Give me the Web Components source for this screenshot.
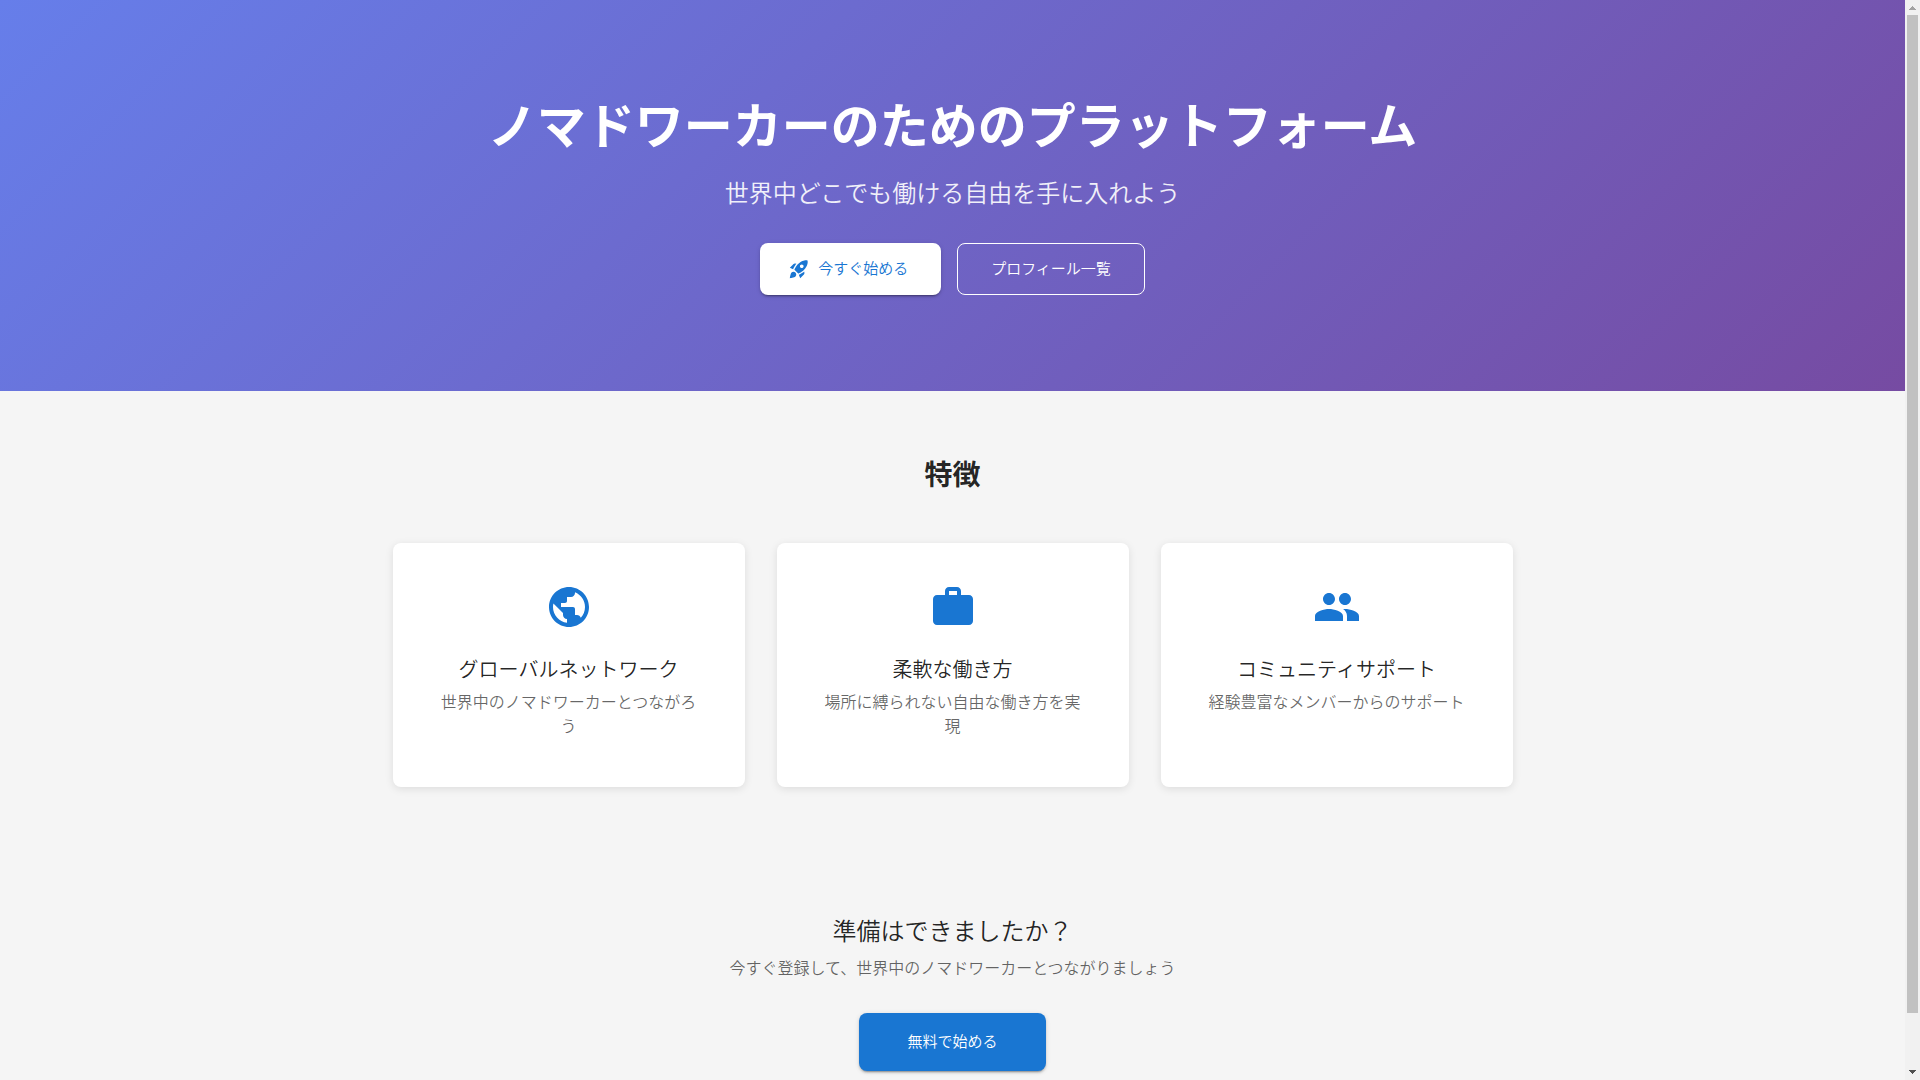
<!DOCTYPE html>
<html lang="ja">
<head>
<meta charset="utf-8">
<meta name="viewport" content="width=device-width, initial-scale=1">
<title>ノマドワーカーのためのプラットフォーム</title>
<style>
body {
  margin: 0;
  background-color: #f5f5f5;
  color: rgba(0, 0, 0, 0.87);
  font-family: Roboto, "Liberation Sans", "Noto Sans CJK JP", sans-serif;
  font-size: 16px;
  font-weight: 350;
  line-height: 24px;
}
</style>
</head>
<body>
<nomad-page></nomad-page>

<script>
const icons = {
  rocket: 'M9.19 6.35c-2.04 2.29-3.44 5.58-3.57 5.89L2 10.69l4.05-4.05c.47-.47 1.15-.68 1.81-.55zM11.17 17s3.74-1.55 5.89-3.7c5.4-5.4 4.5-9.62 4.21-10.57-.95-.3-5.17-1.19-10.57 4.21C8.55 9.09 7 12.83 7 12.83zm6.48-2.19c-2.29 2.04-5.58 3.44-5.89 3.57L13.31 22l4.05-4.05c.47-.47.68-1.15.55-1.81zM9 18c0 .83-.34 1.58-.88 2.12C6.94 21.3 2 22 2 22s.7-4.94 1.88-6.12C4.42 15.34 5.17 15 6 15c1.66 0 3 1.34 3 3m4-9c0-1.1.9-2 2-2s2 .9 2 2-.9 2-2 2-2-.9-2-2',
  public: 'M12 2C6.48 2 2 6.48 2 12s4.48 10 10 10 10-4.48 10-10S17.52 2 12 2m-1 17.93c-3.95-.49-7-3.85-7-7.93 0-.62.08-1.21.21-1.79L9 15v1c0 1.1.9 2 2 2zm6.9-2.54c-.26-.81-1-1.39-1.9-1.39h-1v-3c0-.55-.45-1-1-1H8v-2h2c.55 0 1-.45 1-1V7h2c1.1 0 2-.9 2-2v-.41c2.93 1.19 5 4.06 5 7.41 0 2.08-.8 3.97-2.1 5.39',
  work: 'M20 6h-4V4c0-1.11-.89-2-2-2h-4c-1.11 0-2 .89-2 2v2H4c-1.11 0-1.99.89-1.99 2L2 19c0 1.11.89 2 2 2h16c1.11 0 2-.89 2-2V8c0-1.11-.89-2-2-2m-6 0h-4V4h4z',
  people: 'M16 11c1.66 0 2.99-1.34 2.99-3S17.66 5 16 5s-3 1.34-3 3 1.34 3 3 3m-8 0c1.66 0 2.99-1.34 2.99-3S9.66 5 8 5 5 6.34 5 8s1.34 3 3 3m0 2c-2.33 0-7 1.17-7 3.5V19h14v-2.5c0-2.33-4.67-3.5-7-3.5m8 0c-.29 0-.62.02-.97.05 1.16.84 1.97 1.97 1.97 3.45V19h6v-2.5c0-2.33-4.67-3.5-7-3.5',
};

// <md-icon name="work">
class MdIcon extends HTMLElement {
  constructor() {
    super();
    const shadowRoot = this.attachShadow({mode: 'open'});
    shadowRoot.innerHTML = `
<style>
:host {
  display: block;
  width: 24px;
  height: 24px;
}

svg {
  display: block;
  width: 100%;
  height: 100%;
  fill: currentColor;
}
</style>
<svg viewBox="0 0 24 24" aria-hidden="true"><path d="${icons[this.getAttribute('name')]}"/></svg>
`;
  }
}

// variant: contained (default) / white / outlined
class NomadButton extends HTMLElement {
  constructor() {
    super();
    const shadowRoot = this.attachShadow({mode: 'open'});
    shadowRoot.innerHTML = `
<style>
:host {
  display: inline-flex;
}

button {
  display: inline-flex;
  align-items: center;
  justify-content: center;
  gap: 8px;
  padding: 12px 33px;
  border: 1px solid transparent;
  border-radius: 8px;
  background-color: #1976d2;
  color: #fff;
  font: inherit;
  font-size: 15px;
  line-height: 26px;
  cursor: pointer;
  box-shadow: 0 3px 1px -2px rgba(0, 0, 0, 0.2), 0 2px 2px 0 rgba(0, 0, 0, 0.14), 0 1px 5px 0 rgba(0, 0, 0, 0.12);
}

button:hover {
  background-color: #1565c0;
}

:host([variant="white"]) button {
  padding: 12px 32px 12px 27px;
  background-color: #fff;
  color: #1976d2;
}

:host([variant="outlined"]) button {
  border-color: #fff;
  background-color: transparent;
  box-shadow: none;
}

:host([size="large"]) button {
  padding: 15px 47px;
}

::slotted(md-icon) {
  width: 22px;
  height: 22px;
}
</style>
<button type="button"><slot name="icon"></slot><slot></slot></button>
`;
  }
}

class NomadHero extends HTMLElement {
  constructor() {
    super();
    const shadowRoot = this.attachShadow({mode: 'open'});
    shadowRoot.innerHTML = `
<style>
:host {
  display: block;
  padding: 96px 24px;
  background: linear-gradient(135deg, #667eea 0%, #764ba2 100%);
  color: #fff;
  text-align: center;
}

h1 {
  margin: 0 0 16px;
  font-size: 49px;
  font-weight: 700;
  line-height: 64px;
}

p {
  margin: 0 0 31px;
  font-size: 24px;
  line-height: 36px;
  opacity: 0.9;
}

.actions {
  display: flex;
  flex-wrap: wrap;
  justify-content: center;
  gap: 16px;
}
</style>
<h1><slot name="title"></slot></h1>
<p><slot name="subtitle"></slot></p>
<div class="actions"><slot></slot></div>
`;
  }
}

class FeatureCard extends HTMLElement {
  constructor() {
    super();
    const shadowRoot = this.attachShadow({mode: 'open'});
    shadowRoot.innerHTML = `
<style>
:host {
  display: flex;
  flex-direction: column;
  align-items: center;
  padding: 40px 44px 48px;
  border-radius: 8px;
  background-color: #fff;
  box-shadow: 0 2px 8px rgba(0, 0, 0, 0.1);
  text-align: center;
}

md-icon {
  width: 48px;
  height: 48px;
  color: #1976d2;
}

h3 {
  margin: 24px 0 6px;
  font-size: 20px;
  font-weight: inherit;
  line-height: 30px;
}

p {
  margin: 0;
  color: rgba(0, 0, 0, 0.6);
}
</style>
<md-icon name="${this.getAttribute('icon')}"></md-icon>
<h3><slot name="title"></slot></h3>
<p><slot></slot></p>
`;
  }
}

class FeatureSection extends HTMLElement {
  constructor() {
    super();
    const shadowRoot = this.attachShadow({mode: 'open'});
    shadowRoot.innerHTML = `
<style>
:host {
  display: block;
  box-sizing: border-box;
  max-width: 1168px;
  margin: 0 auto;
  padding: 64px 24px;
}

h2 {
  margin: 0 0 46px;
  font-size: 28px;
  font-weight: 700;
  line-height: 42px;
  text-align: center;
}

.grid {
  display: grid;
  grid-template-columns: repeat(auto-fit, minmax(280px, 1fr));
  gap: 32px;
}
</style>
<h2><slot name="title"></slot></h2>
<div class="grid"><slot></slot></div>
`;
  }
}

class CtaSection extends HTMLElement {
  constructor() {
    super();
    const shadowRoot = this.attachShadow({mode: 'open'});
    shadowRoot.innerHTML = `
<style>
:host {
  display: block;
  padding: 64px 24px;
  text-align: center;
}

h2 {
  margin: 0 0 8px;
  font-size: 24px;
  font-weight: inherit;
  line-height: 34px;
}

p {
  margin: 0 0 32px;
  color: rgba(0, 0, 0, 0.6);
}

.actions {
  display: flex;
  justify-content: center;
}
</style>
<h2><slot name="title"></slot></h2>
<p><slot name="text"></slot></p>
<div class="actions"><slot></slot></div>
`;
  }
}

class PageScrollbar extends HTMLElement {
  constructor() {
    super();
    const shadowRoot = this.attachShadow({mode: 'open'});
    shadowRoot.innerHTML = `
<style>
:host {
  display: flex;
  flex-direction: column;
  align-items: center;
  position: sticky;
  top: 0;
  flex: none;
  width: 15px;
  height: 100vh;
  background-color: #f1f1f1;
}

svg {
  flex: none;
  width: 15px;
  height: 15px;
  shape-rendering: crispEdges;
}

.track {
  flex: 1;
  width: 11px;
}

.thumb {
  height: 95%;
  background-color: #c1c1c1;
}
</style>
<svg viewBox="0 0 15 15"><path fill="#a3a3a3" d="M7 6h1v1h1v1h1v1h1v1H4V9h1V8h1V7h1z"/></svg>
<div class="track"><div class="thumb"></div></div>
<svg viewBox="0 0 15 15"><path fill="#505050" d="M4 5h7v1h-1v1H9v1H8v1H7V8H6V7H5V6H4z"/></svg>
`;
  }
}

class NomadPage extends HTMLElement {
  constructor() {
    super();
    const shadowRoot = this.attachShadow({mode: 'open'});
    shadowRoot.innerHTML = `
<style>
:host {
  display: flex;
  align-items: flex-start;
}

main {
  flex: 1;
  min-width: 0;
}
</style>
<main>
  <nomad-hero>
    <span slot="title">ノマドワーカーのためのプラットフォーム</span>
    <span slot="subtitle">世界中どこでも働ける自由を手に入れよう</span>
    <nomad-button variant="white"><md-icon slot="icon" name="rocket"></md-icon>今すぐ始める</nomad-button>
    <nomad-button variant="outlined">プロフィール一覧</nomad-button>
  </nomad-hero>
  <feature-section>
    <span slot="title">特徴</span>
    <feature-card icon="public"><span slot="title">グローバルネットワーク</span>世界中のノマドワーカーとつながろう</feature-card>
    <feature-card icon="work"><span slot="title">柔軟な働き方</span>場所に縛られない自由な働き方を実現</feature-card>
    <feature-card icon="people"><span slot="title">コミュニティサポート</span>経験豊富なメンバーからのサポート</feature-card>
  </feature-section>
  <cta-section>
    <span slot="title">準備はできましたか？</span>
    <span slot="text">今すぐ登録して、世界中のノマドワーカーとつながりましょう</span>
    <nomad-button size="large">無料で始める</nomad-button>
  </cta-section>
</main>
<page-scrollbar aria-hidden="true"></page-scrollbar>
`;
  }
}

customElements.define('md-icon', MdIcon);
customElements.define('nomad-button', NomadButton);
customElements.define('nomad-hero', NomadHero);
customElements.define('feature-card', FeatureCard);
customElements.define('feature-section', FeatureSection);
customElements.define('cta-section', CtaSection);
customElements.define('page-scrollbar', PageScrollbar);
customElements.define('nomad-page', NomadPage);
</script>
</body>
</html>
